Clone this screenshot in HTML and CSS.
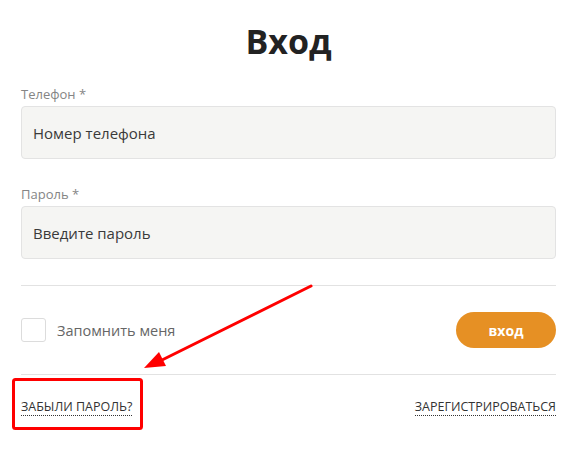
FILE: index.html
```html
<!DOCTYPE html>
<html lang="ru">
<head>
<meta charset="utf-8">
<title>Вход</title>
<link rel="stylesheet" href="styles.css">
</head>
<body>
<div class="page">
  <h1 class="title">Вход</h1>
  <form class="form">
    <label class="field">
      <span class="field-label">Телефон *</span>
      <span class="input">Номер телефона</span>
    </label>
    <label class="field field-second">
      <span class="field-label">Пароль *</span>
      <span class="input">Введите пароль</span>
    </label>
    <hr class="divider">
    <div class="actions">
      <label class="remember">
        <span class="checkbox"></span>
        <span class="remember-text">Запомнить меня</span>
      </label>
      <span class="btn">вход</span>
    </div>
    <hr class="divider">
    <div class="links">
      <a class="link">ЗАБЫЛИ ПАРОЛЬ?</a>
      <a class="link">ЗАРЕГИСТРИРОВАТЬСЯ</a>
    </div>
  </form>
  <svg class="annotation" width="584" height="455" viewBox="0 0 584 455">
    <line x1="311" y1="286" x2="158" y2="362" stroke="#f00" stroke-width="3" stroke-linecap="round"/>
    <polygon points="144,368 159,352 166,366" fill="#f00"/>
    <rect x="13.5" y="379.5" width="128" height="49" rx="2" fill="none" stroke="#f00" stroke-width="3"/>
  </svg>
</div>
</body>
</html>
```

FILE: styles.css
```css
* { box-sizing: border-box; }
html, body { margin: 0; padding: 0; background: #fff; }
body {
  font-family: "Open Sans", "Liberation Sans", sans-serif;
  color: #333;
}
.page {
  position: relative;
  width: 584px;
  height: 455px;
  padding: 0 28px 0 21px;
}
.title {
  margin: 0;
  padding-top: 18px;
  font-size: 34px;
  line-height: 46px;
  font-weight: 700;
  color: #222;
  text-align: center;
}
.form {
  display: flex;
  flex-direction: column;
  margin-top: 21px;
}
.field {
  display: flex;
  flex-direction: column;
  gap: 3px;
}
.field-second { margin-top: 26px; }
.field-label {
  font-size: 13px;
  line-height: 18px;
  color: #858585;
}
.input {
  display: flex;
  align-items: center;
  height: 53px;
  padding: 0 11px;
  background: #f5f5f3;
  border: 1px solid #e3e3e3;
  border-radius: 4px;
  font-size: 15px;
  color: #3a3a3a;
}
.divider {
  margin: 26px 0 0;
  border: 0;
  border-top: 1px solid #e2e2e2;
  height: 0;
}
.actions {
  display: flex;
  align-items: center;
  justify-content: space-between;
  margin-top: 26px;
}
.remember {
  display: flex;
  align-items: center;
  gap: 11px;
}
.checkbox {
  width: 25px;
  height: 24px;
  border: 1px solid #dcdcdc;
  border-radius: 3px;
  background: #fff;
}
.remember-text {
  font-size: 14.5px;
  color: #666;
}
.btn {
  display: flex;
  align-items: center;
  justify-content: center;
  width: 100px;
  height: 36px;
  border-radius: 18px;
  background: #e69024;
  color: #fff;
  font-size: 14px;
  font-weight: 700;
}
.links {
  display: flex;
  justify-content: space-between;
  align-items: flex-start;
  margin-top: 24px;
}
.link {
  font-size: 12.5px;
  line-height: 16px;
  color: #333;
  border-bottom: 1px dotted #333;
  text-decoration: none;
}
.annotation {
  position: absolute;
  left: 0;
  top: 0;
  pointer-events: none;
}
```
